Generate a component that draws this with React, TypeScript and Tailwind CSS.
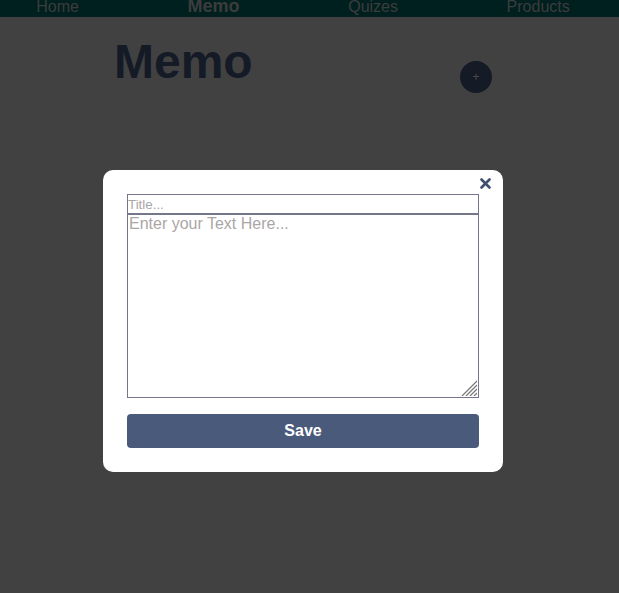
import React from "react";

export default function App() {
  return (
    <div className="relative min-h-[593px] overflow-hidden bg-[#414141] font-['Liberation_Sans',Arial,sans-serif]">
      <nav className="h-[17px] overflow-hidden bg-[#002020]">
        <ul className="-ml-[18px] -mt-[3px] flex w-[642px] items-baseline">
          <li className="flex-auto text-center text-[16px] leading-[18px] text-[#3c3c3c]">Home</li>
          <li className="flex-auto text-center text-[18px] font-bold leading-[18px] text-[#3c3c3c]">Memo</li>
          <li className="flex-auto text-center text-[16px] leading-[18px] text-[#3c3c3c]">Quizes</li>
          <li className="flex-auto text-center text-[16px] leading-[18px] text-[#3c3c3c]">Products</li>
        </ul>
      </nav>

      <div className="flex w-[492px] justify-between pl-[114px] pt-[17px]">
        <h1 className="text-[48px] font-bold leading-[55px] text-[#141a26]">Memo</h1>
        <button className="mt-[27px] flex h-[32px] w-[32px] items-center justify-center rounded-full bg-[#141a26] text-[12px] text-[#4a4a4a]">
          +
        </button>
      </div>

      <div className="fixed inset-0 pl-[103px] pt-[170px]">
        <div className="relative w-[400px] rounded-[10px] bg-white p-[24px]">
          <button className="absolute right-[12px] top-[8px] flex h-[11px] w-[11px] items-center justify-center">
            <svg width="11" height="11" viewBox="0 0 11 11">
              <path d="M1.5 1.5 L9.5 9.5 M9.5 1.5 L1.5 9.5" stroke="#3e4f71" strokeWidth="2.6" strokeLinecap="round" />
            </svg>
          </button>
          <input
            placeholder="Title..."
            className="block h-[20px] w-full border border-[#76768a] px-0 text-[13.33px] leading-[normal] text-black outline-none placeholder:text-[#aaa6a6]"
          />
          <div className="relative">
            <textarea
              placeholder="Enter your Text Here..."
              className="block h-[184px] w-full resize-none border border-[#76768a] px-[1px] py-0 text-[16px] leading-[normal] text-black outline-none placeholder:text-[#aaa6a6]"
            />
            <svg
              className="pointer-events-none absolute bottom-[2px] right-[2px]"
              width="16"
              height="16"
              viewBox="0 0 16 16"
            >
              <path
                d="M1 16 L16 1 M5 16 L16 5 M9 16 L16 9 M13 16 L16 13"
                stroke="#7a7a7a"
                strokeWidth="1.3"
              />
            </svg>
          </div>
          <button className="mt-[16px] block h-[34px] w-full rounded-[4px] bg-[#4a5a7b] text-[16px] font-bold text-white">
            Save
          </button>
        </div>
      </div>
    </div>
  );
}
